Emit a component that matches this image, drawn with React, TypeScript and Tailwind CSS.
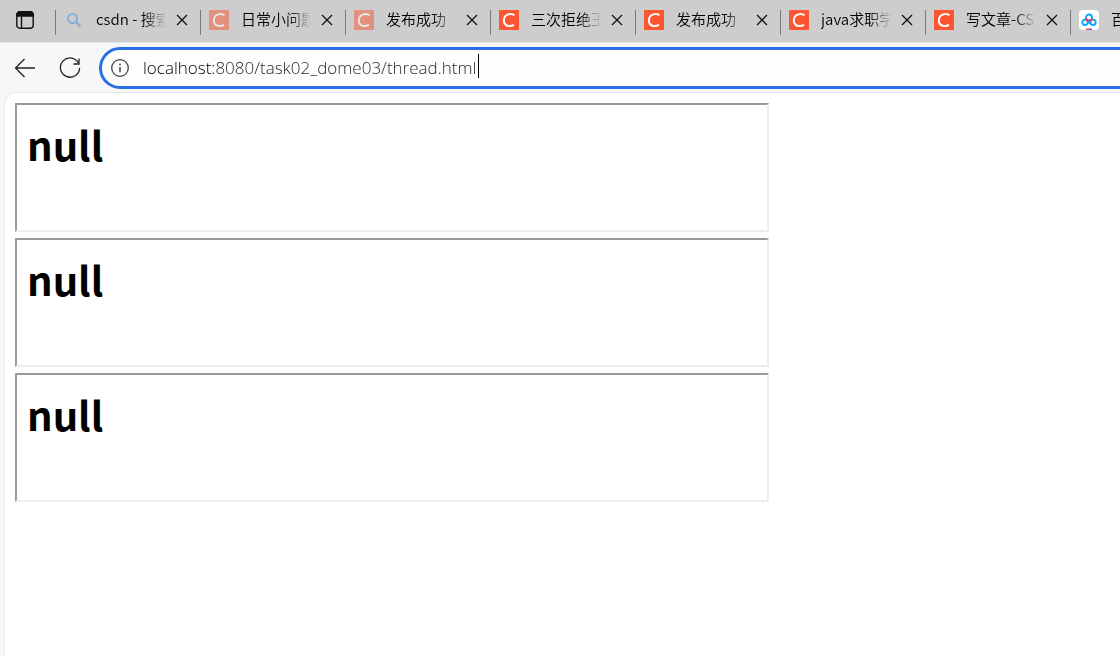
import React from 'react';

interface Tab {
  title: string;
  icon: 'search' | 'csdn' | 'baidu';
  asleep?: boolean;
}

const tabs: Tab[] = [
  { title: 'csdn - 搜索', icon: 'search', asleep: true },
  { title: '日常小问题', icon: 'csdn', asleep: true },
  { title: '发布成功', icon: 'csdn', asleep: true },
  { title: '三次拒绝王', icon: 'csdn' },
  { title: '发布成功', icon: 'csdn' },
  { title: 'java求职学', icon: 'csdn' },
  { title: '写文章-CSDN', icon: 'csdn' },
  { title: '百度网盘', icon: 'baidu' },
];

const frames = ['frame-1', 'frame-2', 'frame-3'];

function TabIcon({ icon }: { icon: Tab['icon'] }) {
  if (icon === 'search') {
    return (
      <svg viewBox="0 0 20 20" className="h-5 w-5" fill="none" stroke="#3f97e0" strokeWidth="2">
        <circle cx="8.5" cy="8.5" r="4.5" />
        <path d="M12 12l4.5 4.5" strokeWidth="2.4" />
      </svg>
    );
  }
  if (icon === 'baidu') {
    return (
      <svg viewBox="0 0 20 20" className="h-5 w-5" fill="none" strokeWidth="1.8">
        <rect width="20" height="20" rx="4" fill="#fff" />
        <circle cx="10" cy="7.5" r="3" stroke="#06a7ff" />
        <circle cx="6" cy="12.3" r="2.7" stroke="#06a7ff" />
        <circle cx="14" cy="12.3" r="2.7" stroke="#06a7ff" />
        <path d="M7 8a3 3 0 0 0 6 0" stroke="#f0405e" />
        <path d="M8.5 11.5l3 2.2" stroke="#06a7ff" />
        <path d="M7 19.3h3" stroke="#f0405e" strokeWidth="1.4" />
        <path d="M10 19.3h3" stroke="#2468f2" strokeWidth="1.4" />
      </svg>
    );
  }
  return (
    <svg viewBox="0 0 20 20" className="h-5 w-5">
      <rect width="20" height="20" fill="#fc5531" />
      <path
        d="M15.5 5.2C14.3 4.2 12.9 3.8 11.3 3.9 7.5 4.1 4.9 6.7 4.8 10.2c-.1 3.5 2.2 5.9 5.8 5.9 1.7 0 3.1-.4 4.3-1.2"
        fill="none"
        stroke="#fff"
        strokeWidth="2"
      />
    </svg>
  );
}

function BrowserTab({ tab }: { tab: Tab }) {
  return (
    <div className="flex h-full w-[145px] shrink-0 items-center">
      <div className="mt-1 h-[25px] w-px shrink-0 bg-[#7b7b7b]" />
      <button className="flex min-w-0 items-center pl-2 text-left">
        <span className={tab.asleep ? 'shrink-0 opacity-50' : 'shrink-0'}>
          <TabIcon icon={tab.icon} />
        </span>
        <span className="ml-3 w-[70px] overflow-hidden whitespace-nowrap pb-[2px] text-[15px] leading-5 font-[350] text-black [mask-image:linear-gradient(to_right,#000_48px,transparent_70px)]">
          {tab.title}
        </span>
      </button>
      <button aria-label="Close tab" className="ml-[6px] shrink-0 p-1">
        <svg viewBox="0 0 12 12" className="h-3 w-3" stroke="#111" strokeWidth="1.3">
          <path d="M1 1l10 10M11 1L1 11" />
        </svg>
      </button>
    </div>
  );
}

function TabStrip() {
  return (
    <div className="flex h-[42px] items-center overflow-hidden bg-[#cdcdcd] pb-[2px]">
      <button aria-label="Tab actions" className="flex w-[55px] shrink-0 pl-4">
        <svg viewBox="0 0 18 18" className="h-[18px] w-[18px]" fill="none" stroke="#111" strokeWidth="1.4">
          <rect x="0.8" y="0.8" width="16.4" height="16.4" rx="3" />
          <path d="M1 3.5A2.5 2.5 0 0 1 3.5 1h11A2.5 2.5 0 0 1 17 3.5V5H1z" fill="#111" />
          <path d="M5.5 5v12" />
        </svg>
      </button>
      {tabs.map((tab, i) => (
        <BrowserTab key={i} tab={tab} />
      ))}
    </div>
  );
}

function Toolbar() {
  return (
    <div className="flex items-center border-t border-[#e6e6e6] pt-1 pb-[3px]">
      <button aria-label="Back" className="ml-[14px] shrink-0 pb-px">
        <svg viewBox="0 0 22 22" className="h-[22px] w-[22px]" fill="none" stroke="#222" strokeWidth="1.3">
          <path d="M21 11H1.5M10.5 2L1.5 11l9 9" />
        </svg>
      </button>
      <button aria-label="Refresh" className="ml-[23px] shrink-0 pb-px">
        <svg viewBox="0 0 22 22" className="h-[22px] w-[22px]" fill="none" stroke="#222" strokeWidth="1.3">
          <path d="M19.7 6.5A9.6 9.6 0 1 0 20.6 11" />
          <path d="M20 1.5V7h-5.5" />
        </svg>
      </button>
      <div className="-mr-6 ml-[18px] flex h-[42px] flex-1 items-center rounded-full border-3 border-[#2a6fe8] bg-[#fdfdfd] pl-2">
        <svg viewBox="0 0 20 20" className="h-5 w-5 shrink-0" fill="none" stroke="#444" strokeWidth="1.3">
          <circle cx="10" cy="10" r="8.3" />
          <path d="M10 9v5.2" strokeWidth="1.5" />
          <circle cx="10" cy="6.4" r="0.9" fill="#444" stroke="none" />
        </svg>
        <input
          type="text"
          aria-label="Address"
          defaultValue="localhost:8080/task02_dome03/thread.html"
          className="ml-3 box-content field-sizing-content bg-[linear-gradient(to_right,#000000_72px,#222222_72px)] bg-clip-text pr-[2px] pl-px font-['Open_Sans','Noto_Sans',sans-serif] text-[17px] leading-6 font-light text-transparent outline-none"
        />
        <span className="mb-1 h-6 w-px bg-black" />
      </div>
    </div>
  );
}

export default function App() {
  return (
    <div className="flex min-h-screen flex-col overflow-hidden bg-[#f7f7f7] font-['Noto_Sans_CJK_SC',sans-serif]">
      <TabStrip />
      <Toolbar />
      <main className="ml-1 flex flex-1 flex-col gap-[6px] rounded-tl-xl border-t border-l border-[#e9e9e9] bg-white px-[10px] pt-[10px]">
        {frames.map((id) => (
          <section
            key={id}
            className="h-[129px] w-full max-w-[754px] border-2 border-t-[#9a9a9a] border-r-[#eeeeee] border-b-[#eeeeee] border-l-[#9a9a9a] px-[10px] pt-[9px]"
          >
            <h1 className="text-[40px] leading-[60px] font-bold text-black">null</h1>
          </section>
        ))}
      </main>
    </div>
  );
}
